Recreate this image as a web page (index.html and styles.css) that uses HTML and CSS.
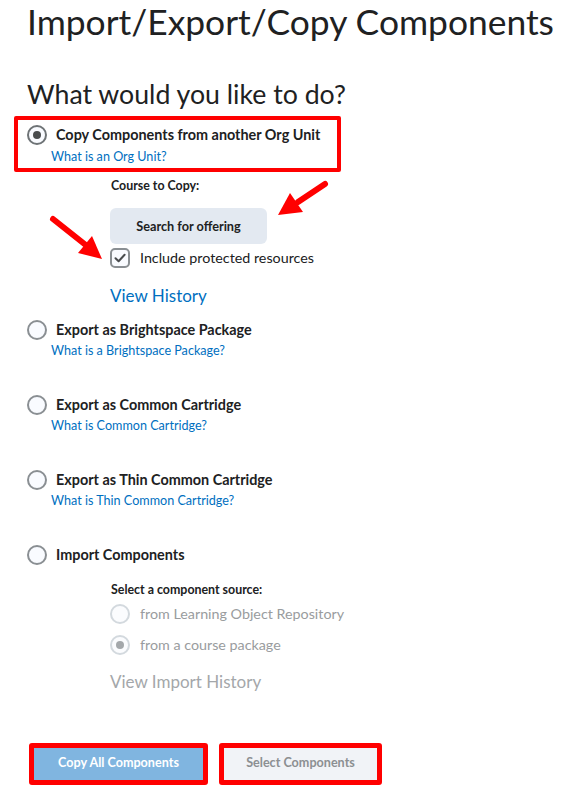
FILE: index.html
```html
<!DOCTYPE html>
<html lang="en">
<head>
<meta charset="utf-8">
<title>Import/Export/Copy Components</title>
<link rel="stylesheet" href="styles.css">
</head>
<body>
<div class="page">
  <h1 class="title">Import/Export/Copy Components</h1>
  <h2 class="subtitle">What would you like to do?</h2>

  <div class="option boxed">
    <div class="opt-row">
      <span class="radio checked"></span>
      <span class="opt-label">Copy Components from another Org Unit</span>
    </div>
    <a class="opt-link">What is an Org Unit?</a>
  </div>

  <div class="sub">
    <div class="sub-label">Course to Copy:</div>
    <button class="search-btn">Search for offering</button>
    <div class="check-row">
      <span class="checkbox">
        <svg viewBox="0 0 20 20" width="20" height="20"><path d="M5.5 10.2 L8.6 13.2 L14.6 6.8" fill="none" stroke="#494c4e" stroke-width="2" stroke-linecap="round" stroke-linejoin="round"/></svg>
      </span>
      <span class="check-label">Include protected resources</span>
    </div>
    <a class="big-link">View History</a>
  </div>

  <div class="option first-plain">
    <div class="opt-row">
      <span class="radio"></span>
      <span class="opt-label">Export as Brightspace Package</span>
    </div>
    <a class="opt-link">What is a Brightspace Package?</a>
  </div>

  <div class="option">
    <div class="opt-row">
      <span class="radio"></span>
      <span class="opt-label">Export as Common Cartridge</span>
    </div>
    <a class="opt-link">What is Common Cartridge?</a>
  </div>

  <div class="option">
    <div class="opt-row">
      <span class="radio"></span>
      <span class="opt-label">Export as Thin Common Cartridge</span>
    </div>
    <a class="opt-link">What is Thin Common Cartridge?</a>
  </div>

  <div class="option">
    <div class="opt-row">
      <span class="radio"></span>
      <span class="opt-label">Import Components</span>
    </div>
  </div>

  <div class="sub import-sub">
    <div class="sub-label">Select a component source:</div>
    <div class="src-row first">
      <span class="radio disabled"></span>
      <span class="src-label">from Learning Object Repository</span>
    </div>
    <div class="src-row second">
      <span class="radio disabled checked"></span>
      <span class="src-label">from a course package</span>
    </div>
    <a class="big-link disabled-link">View Import History</a>
  </div>

  <div class="actions">
    <div class="frame"><button class="btn primary">Copy All Components</button></div>
    <div class="frame"><button class="btn secondary">Select Components</button></div>
  </div>
</div>

<svg class="annotations" width="575" height="797" viewBox="0 0 575 797">
  <line x1="325" y1="184" x2="298" y2="202" stroke="#ff0000" stroke-width="6" stroke-linecap="round"/>
  <polygon points="278,215 303,212 290,193" fill="#ff0000"/>
  <line x1="53" y1="219" x2="87" y2="246" stroke="#ff0000" stroke-width="6" stroke-linecap="round"/>
  <polygon points="102,259 78,253 92,236" fill="#ff0000"/>
</svg>
</body>
</html>
```

FILE: styles.css
```css
* { box-sizing: border-box; }

html, body {
  margin: 0;
  padding: 0;
  background: #ffffff;
}

body {
  font-family: Lato, "Open Sans", "Liberation Sans", sans-serif;
  color: #202122;
  position: relative;
  width: 575px;
  height: 797px;
  overflow: hidden;
}

.page {
  display: flex;
  flex-direction: column;
  align-items: flex-start;
  padding-left: 14px;
}

.title {
  margin: 0;
  padding-left: 13px;
  font-size: 35.4px;
  line-height: 44px;
  font-weight: 400;
  white-space: nowrap;
  color: #202122;
}

.subtitle {
  margin: 34px 0 0 0;
  padding-left: 13px;
  font-size: 26.7px;
  line-height: 32px;
  font-weight: 400;
  white-space: nowrap;
  color: #202122;
}

.option {
  display: flex;
  flex-direction: column;
  padding-left: 13px;
  margin-top: 36px;
}

.option.boxed {
  margin-top: 6px;
  border: 4px solid #ff0000;
  border-radius: 2px;
  padding: 5px 17px 3px 9px;
}

.option.first-plain { margin-top: 12px; }

.opt-row {
  display: flex;
  align-items: center;
  gap: 9px;
  height: 20px;
}

.opt-label {
  font-size: 14.4px;
  font-weight: 700;
  line-height: 20px;
  white-space: nowrap;
  color: #202122;
}

.opt-link {
  margin: 3px 0 0 24px;
  font-size: 12.6px;
  line-height: 16px;
  white-space: nowrap;
  color: #006fbf;
  text-decoration: none;
}

.option.boxed .opt-link { margin-top: 4px; }

.radio {
  display: inline-block;
  flex: none;
  width: 20px;
  height: 20px;
  border-radius: 50%;
  border: 2px solid #8a8f93;
  background: #f9fbff;
  position: relative;
}

.radio.checked {
  border-color: #6e7376;
}

.radio.checked::after {
  content: "";
  position: absolute;
  left: 4px;
  top: 4px;
  width: 8px;
  height: 8px;
  border-radius: 50%;
  background: #494c4e;
}

.radio.disabled {
  border-color: #d3d9de;
  background: #fbfcfe;
}

.radio.disabled.checked::after {
  background: #a4a8ab;
}

.sub {
  display: flex;
  flex-direction: column;
  align-items: flex-start;
  padding-left: 96px;
  margin-top: 6px;
}

.sub-label {
  padding-left: 1px;
  font-size: 12.4px;
  font-weight: 700;
  line-height: 16px;
  white-space: nowrap;
  color: #202122;
}

.search-btn {
  margin-top: 14px;
  width: 157px;
  height: 36px;
  border: none;
  border-radius: 6px;
  background: #e3e9f1;
  font-family: inherit;
  font-size: 12.7px;
  font-weight: 700;
  color: #202122;
  padding: 0;
}

.check-row {
  display: flex;
  align-items: center;
  gap: 10px;
  margin-top: 4px;
  height: 20px;
}

.checkbox {
  display: inline-block;
  width: 20px;
  height: 20px;
  border: 2px solid #8a8f93;
  border-radius: 5px;
  background: #f9fbff;
  position: relative;
}

.checkbox svg {
  position: absolute;
  left: -2px;
  top: -2px;
}

.check-label {
  font-size: 14.3px;
  line-height: 20px;
  white-space: nowrap;
  color: #202122;
}

.big-link {
  margin-top: 16px;
  font-size: 17px;
  line-height: 24px;
  white-space: nowrap;
  color: #006fbf;
  text-decoration: none;
}

.import-sub { margin-top: 17px; }

.src-row {
  display: flex;
  align-items: center;
  gap: 10px;
  height: 20px;
}

.src-row.first { margin-top: 6px; }
.src-row.second { margin-top: 11px; }

.src-label {
  font-size: 14.3px;
  line-height: 20px;
  white-space: nowrap;
  color: #999c9e;
}

.disabled-link {
  margin-top: 15px;
  color: #a4a7aa;
}

.actions {
  display: flex;
  gap: 11px;
  margin-top: 49px;
  padding-left: 15px;
}

.frame {
  border: 5px solid #ff0000;
  border-radius: 3px;
  display: flex;
}

.btn {
  height: 32px;
  border: none;
  border-radius: 0;
  font-family: inherit;
  font-size: 12.6px;
  font-weight: 700;
  line-height: 30px;
  padding: 0 0 2px 0;
}

.btn.primary {
  width: 169px;
  background: #80b5e0;
  color: #ffffff;
}

.btn.secondary {
  width: 153px;
  background: #f1f3f7;
  color: #8c8f92;
}

.annotations {
  position: absolute;
  left: 0;
  top: 0;
  pointer-events: none;
}
```
